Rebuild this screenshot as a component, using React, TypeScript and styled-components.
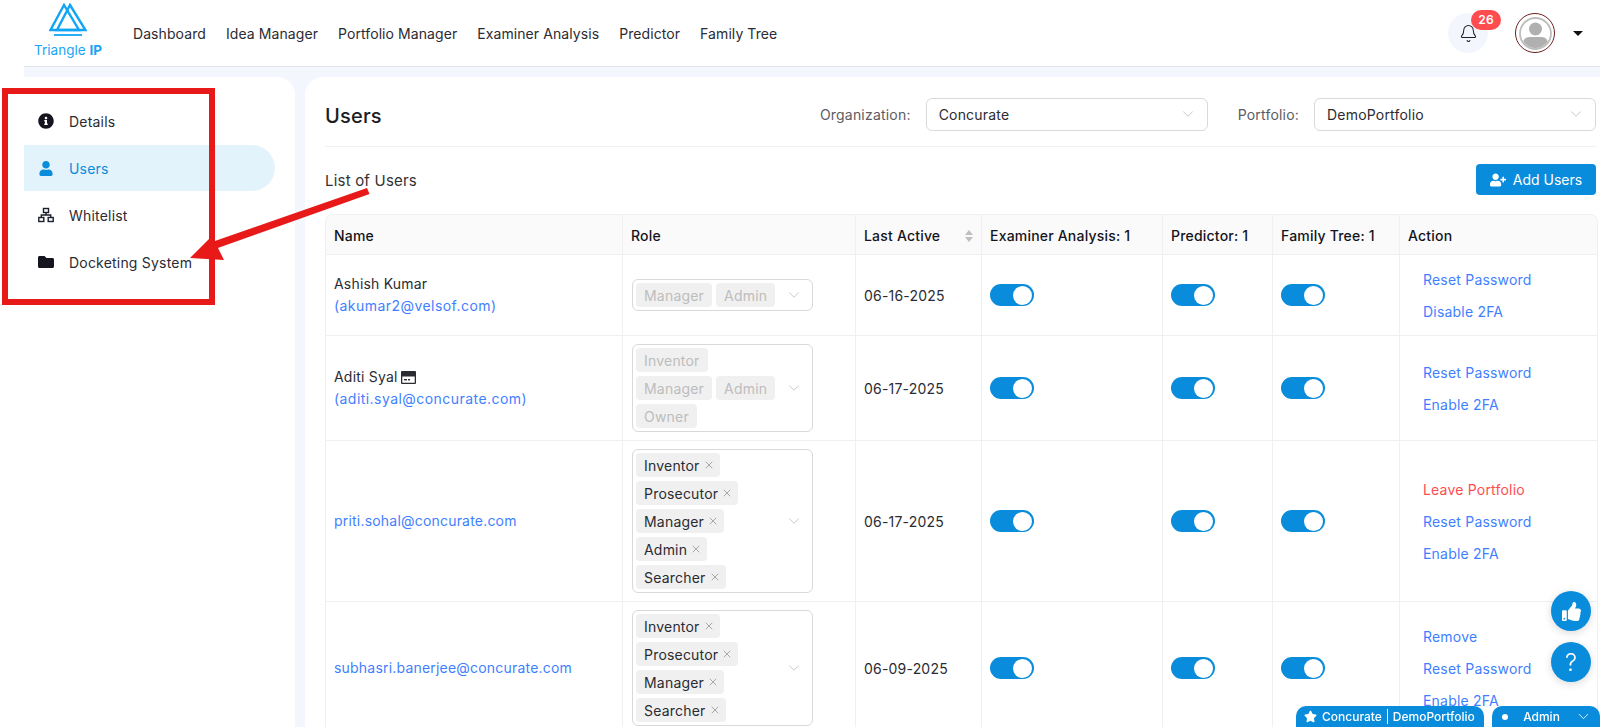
import { ChevronDown, Bell, X } from "lucide-react";
import { FaInfoCircle, FaUser, FaFolder, FaUserPlus, FaThumbsUp, FaStar } from "react-icons/fa";
import styled, { createGlobalStyle } from "styled-components";

const BLUE = "#0a8cdc";
const LINK = "#3f7fff";

const GlobalStyle = createGlobalStyle`
	html, body {
		margin: 0;
		height: 100%;
		overflow: hidden;
		background: #fff;
		font-family: Inter, "Liberation Sans", sans-serif;
		font-size: 14px;
		color: #2b2b33;
		letter-spacing: 0.2px;
	}
	* {
		box-sizing: border-box;
	}
`;

type UserRow = {
	name?: string;
	email: string;
	card?: boolean;
	roles: string[][];
	disabled?: boolean;
	date: string;
	actions: { label: string; danger?: boolean }[];
};

const NAV_ITEMS = ["Dashboard", "Idea Manager", "Portfolio Manager", "Examiner Analysis", "Predictor", "Family Tree"];

const COLUMNS = [297, 233, 126, 181, 110, 127, 197];

const ROWS: UserRow[] = [
	{
		name: "Ashish Kumar",
		email: "(akumar2@velsof.com)",
		roles: [["Manager", "Admin"]],
		disabled: true,
		date: "06-16-2025",
		actions: [{ label: "Reset Password" }, { label: "Disable 2FA" }],
	},
	{
		name: "Aditi Syal",
		email: "(aditi.syal@concurate.com)",
		card: true,
		roles: [["Inventor"], ["Manager", "Admin"], ["Owner"]],
		disabled: true,
		date: "06-17-2025",
		actions: [{ label: "Reset Password" }, { label: "Enable 2FA" }],
	},
	{
		email: "priti.sohal@concurate.com",
		roles: [["Inventor"], ["Prosecutor"], ["Manager"], ["Admin"], ["Searcher"]],
		date: "06-17-2025",
		actions: [{ label: "Leave Portfolio", danger: true }, { label: "Reset Password" }, { label: "Enable 2FA" }],
	},
	{
		email: "subhasri.banerjee@concurate.com",
		roles: [["Inventor"], ["Prosecutor"], ["Manager"], ["Searcher"]],
		date: "06-09-2025",
		actions: [{ label: "Remove" }, { label: "Reset Password" }, { label: "Enable 2FA" }],
	},
];

const Logo = () => (
	<LogoBox>
		<svg width="38" height="34" viewBox="0 0 38 34" fill="none" stroke="#12a5f5" strokeWidth="2.4">
			<path d="M15 2 L1.500 27 H30 Z" />
			<path d="M21 2 L36.500 27 H8 Z" />
			<path d="M5 32 H33" strokeWidth="1.8" />
		</svg>
		<LogoText>
			Triangle <b>IP</b>
		</LogoText>
	</LogoBox>
);

const SitemapIcon = () => (
	<svg width="16" height="16" viewBox="0 0 16 16" fill="none" stroke="#1c1f2b" strokeWidth="1.4">
		<rect x="5.500" y="1.500" width="5" height="4" />
		<rect x="0.800" y="10.500" width="5" height="4" />
		<rect x="10.200" y="10.500" width="5" height="4" />
		<path d="M8 5.500 V8 M3.300 10.500 V8 H12.700 V10.500" />
	</svg>
);

const CardIcon = () => (
	<CardSvg width="15" height="13" viewBox="0 0 15 13">
		<path d="M1 0 H14 Q15 0 15 1 V12 Q15 13 14 13 H1 Q0 13 0 12 V1 Q0 0 1 0 Z M1.300 5.500 V11.700 H13.700 V5.500 Z" fill="#2b2b33" fillRule="evenodd" />
		<rect x="3" y="8" width="3" height="1.400" fill="#2b2b33" />
		<rect x="7" y="8" width="2" height="1.400" fill="#2b2b33" />
	</CardSvg>
);

const Toggle = () => (
	<ToggleTrack>
		<ToggleKnob />
	</ToggleTrack>
);

const RoleSelect = ({ lines, disabled }: { lines: string[][]; disabled?: boolean }) => (
	<SelectBox>
		<TagLines>
			{lines.map((line) => (
				<TagLine key={line.join()}>
					{line.map((role) => (
						<Tag key={role} $disabled={disabled}>
							{role}
							{!disabled && <X size={12} strokeWidth={1.2} color="#777" />}
						</Tag>
					))}
				</TagLine>
			))}
		</TagLines>
		<SelectChevron size={18} strokeWidth={1} />
	</SelectBox>
);

const App = () => {
	return (
		<Page>
			<GlobalStyle />
			<Header>
				<Logo />
				<Nav>
					{NAV_ITEMS.map((item) => (
						<NavLink key={item}>{item}</NavLink>
					))}
				</Nav>
				<HeaderRight>
					<BellCircle>
						<Bell size={19} strokeWidth={1.3} color="#1c1f2b" />
						<Badge>26</Badge>
					</BellCircle>
					<Avatar>
						<svg width="33" height="33" viewBox="0 0 33 33">
							<defs>
								<clipPath id="avatar-clip">
									<circle cx="16.500" cy="16.500" r="14.500" />
								</clipPath>
							</defs>
							<circle cx="16.500" cy="16.500" r="15.500" fill="#fff" stroke="#bdbdbd" strokeWidth="1.800" />
							<g clipPath="url(#avatar-clip)" fill="#b0b0b0">
								<circle cx="16.500" cy="12" r="6.500" />
								<rect x="4" y="20" width="25" height="14" rx="6" />
							</g>
						</svg>
					</Avatar>
					<Caret />
				</HeaderRight>
			</Header>

			<Body>
				<Sidebar>
					<SideItem>
						<FaInfoCircle size={16} />
						Details
					</SideItem>
					<SideItem $active>
						<FaUser size={15} />
						Users
					</SideItem>
					<SideItem>
						<SitemapIcon />
						Whitelist
					</SideItem>
					<SideItem>
						<FaFolder size={16} />
						Docketing System
					</SideItem>
				</Sidebar>

				<Main>
					<TopBar>
						<Title>Users</Title>
						<Filters>
							<FilterLabel>Organization:</FilterLabel>
							<Dropdown $width={282}>
								Concurate
								<ChevronDown size={18} strokeWidth={1} color="#b4b4b4" />
							</Dropdown>
							<FilterLabel $gap={30}>Portfolio:</FilterLabel>
							<Dropdown $width={282}>
								DemoPortfolio
								<ChevronDown size={18} strokeWidth={1} color="#b4b4b4" />
							</Dropdown>
						</Filters>
					</TopBar>

					<ListBar>
						<ListTitle>List of Users</ListTitle>
						<AddButton>
							<FaUserPlus size={16} />
							Add Users
						</AddButton>
					</ListBar>

					<Table>
						<colgroup>
							{COLUMNS.map((w, i) => (
								<col key={i} width={w} />
							))}
						</colgroup>
						<thead>
							<tr>
								<HeadCell>Name</HeadCell>
								<HeadCell>Role</HeadCell>
								<HeadCell>
									<HeadSort>
										Last Active
										<SortArrows>
											<SortUp />
											<SortDown />
										</SortArrows>
									</HeadSort>
								</HeadCell>
								<HeadCell>Examiner Analysis: 1</HeadCell>
								<HeadCell>Predictor: 1</HeadCell>
								<HeadCell>Family Tree: 1</HeadCell>
								<HeadCell>Action</HeadCell>
							</tr>
						</thead>
						<tbody>
							{ROWS.map((row) => (
								<tr key={row.email}>
									<Cell>
										{row.name && (
											<UserName>
												{row.name}
												{row.card && <CardIcon />}
											</UserName>
										)}
										<Email $wide={!!row.name}>{row.email}</Email>
									</Cell>
									<Cell>
										<RoleSelect lines={row.roles} disabled={row.disabled} />
									</Cell>
									<Cell>{row.date}</Cell>
									<Cell>
										<Toggle />
									</Cell>
									<Cell>
										<Toggle />
									</Cell>
									<Cell>
										<Toggle />
									</Cell>
									<Cell>
										{row.actions.map((action) => (
											<ActionLink key={action.label} $danger={action.danger}>
												{action.label}
											</ActionLink>
										))}
									</Cell>
								</tr>
							))}
						</tbody>
					</Table>
				</Main>
			</Body>

			<Fabs>
				<Fab>
					<FaThumbsUp size={19} />
				</Fab>
				<Fab>?</Fab>
			</Fabs>

			<BottomTabs>
				<BottomTab $width={188}>
					<FaStar size={13} />
					Concurate
					<TabDivider />
					DemoPortfolio
				</BottomTab>
				<BottomTab $width={108}>
					<TabDot />
					<TabLabel>Admin</TabLabel>
					<ChevronDown size={17} strokeWidth={1.2} />
				</BottomTab>
			</BottomTabs>

			{/* annotation drawn over the screenshot */}
			<Highlight />
			<Arrow width="230" height="90" viewBox="0 0 230 90">
				<path d="M183 2 L185.500 8 L31 63 L28 56 Z" fill="#e81919" />
				<path d="M6 72 L28 50 L40 74 Z" fill="#e81919" />
			</Arrow>
		</Page>
	);
};

export default App;

const Page = styled.div`
	height: 727px;
	overflow: hidden;
	display: flex;
	flex-direction: column;
`;

const Header = styled.header`
	height: 67px;
	flex: none;
	display: flex;
	align-items: center;
	margin-left: 24px;
	padding: 0 17px 0 9px;
	border-bottom: 1px solid #dfe3ea;
	background: #fff;
`;

const LogoBox = styled.div`
	width: 70px;
	display: flex;
	flex-direction: column;
	align-items: center;
	gap: 6px;
	margin-top: -5px;
`;

const LogoText = styled.span`
	font-size: 13.500px;
	line-height: 15px;
	letter-spacing: 0;
	color: #1ba4f4;
	white-space: nowrap;

	b {
		font-weight: 700;
	}
`;

const Nav = styled.nav`
	display: flex;
	gap: 20px;
	margin-left: 30px;
	letter-spacing: 0.08px;
`;

const NavLink = styled.a`
	font-size: 14px;
	color: #2b2b33;
`;

const HeaderRight = styled.div`
	margin-left: auto;
	display: flex;
	align-items: center;
`;

const BellCircle = styled.div`
	position: relative;
	width: 40px;
	height: 40px;
	border-radius: 50%;
	background: #f3f7fd;
	display: flex;
	align-items: center;
	justify-content: center;
`;

const Badge = styled.span`
	position: absolute;
	left: 23px;
	top: -3px;
	width: 30px;
	height: 20px;
	border-radius: 10px;
	background: #ff4d4f;
	color: #fff;
	font-size: 12px;
	font-weight: 600;
	line-height: 20px;
	text-align: center;
`;

const Avatar = styled.div`
	width: 40px;
	height: 40px;
	margin-left: 27px;
	border-radius: 50%;
	border: 1.500px solid #6e1f1f;
	display: flex;
	align-items: center;
	justify-content: center;
`;

const Caret = styled.span`
	margin-left: 18px;
	width: 0;
	height: 0;
	border-left: 5px solid transparent;
	border-right: 5px solid transparent;
	border-top: 5px solid #111;
`;

const Body = styled.div`
	flex: 1;
	min-height: 0;
	margin-left: 24px;
	padding-top: 10px;
	background: #f3f7fd;
	display: flex;
	gap: 10px;
`;

const Sidebar = styled.aside`
	width: 271px;
	flex: none;
	background: #fff;
	border-top-right-radius: 18px;
	padding-top: 21px;
	display: flex;
	flex-direction: column;
	gap: 1px;
`;

const SideItem = styled.div<{ $active?: boolean }>`
	width: 251px;
	height: 46px;
	padding-left: 14px;
	display: flex;
	align-items: center;
	gap: 15px;
	border-radius: 0 23px 23px 0;
	color: ${(props) => (props.$active ? BLUE : "#2b2b33")};
	background: ${(props) => (props.$active ? "#e3f3fb" : "transparent")};

	svg {
		width: 16px;
		flex: none;
		color: ${(props) => (props.$active ? BLUE : "#15151f")};
	}
`;

const Main = styled.main`
	flex: 1;
	min-width: 0;
	background: #fff;
	border-top-left-radius: 18px;
	padding: 0 4px 0 20px;
`;

const TopBar = styled.div`
	height: 70px;
	display: flex;
	align-items: center;
	justify-content: space-between;
	border-bottom: 1px solid #f0f0f0;
	padding-top: 5px;
`;

const Title = styled.h1`
	margin: 4px 0 0;
	font-size: 20px;
	font-weight: 500;
	color: #1c1c24;
`;

const Filters = styled.div`
	display: flex;
	align-items: center;
`;

const FilterLabel = styled.span<{ $gap?: number }>`
	margin-left: ${(props) => props.$gap ?? 0}px;
	margin-right: 15px;
	color: #5c5c64;
`;

const Dropdown = styled.div<{ $width: number }>`
	width: ${(props) => props.$width}px;
	height: 33px;
	padding: 0 10px 0 12px;
	display: flex;
	align-items: center;
	justify-content: space-between;
	background: #fff;
	border: 1px solid #d9d9d9;
	border-radius: 6px;
`;

const ListBar = styled.div`
	height: 67px;
	padding-bottom: 2px;
	display: flex;
	align-items: center;
	justify-content: space-between;
`;

const ListTitle = styled.h2`
	margin: 2px 0 0;
	font-size: 15px;
	font-weight: 400;
	color: #333;
`;

const AddButton = styled.button`
	width: 120px;
	height: 31px;
	border: 0;
	border-radius: 4px;
	background: ${BLUE};
	color: #fff;
	font: inherit;
	display: flex;
	align-items: center;
	justify-content: center;
	gap: 7px;
`;

const Table = styled.table`
	width: 1271px;
	table-layout: fixed;
	border-collapse: separate;
	border-spacing: 0;
	border: 1px solid #f0f0f0;
	border-bottom: 0;
	border-radius: 8px 8px 0 0;
`;

const HeadCell = styled.th`
	height: 40px;
	padding: 2px 8px 0;
	text-align: left;
	font-weight: 500;
	color: #14141c;
	background: #fafafa;
	border-bottom: 1px solid #f0f0f0;
	border-right: 1px solid #f0f0f0;
	white-space: nowrap;

	&:first-child {
		border-top-left-radius: 8px;
	}
	&:last-child {
		border-top-right-radius: 8px;
		border-right: 0;
	}
`;

const HeadSort = styled.div`
	display: flex;
	align-items: center;
	justify-content: space-between;
`;

const SortArrows = styled.span`
	display: flex;
	flex-direction: column;
	gap: 2px;
`;

const SortUp = styled.span`
	width: 0;
	height: 0;
	border-left: 4px solid transparent;
	border-right: 4px solid transparent;
	border-bottom: 5px solid #bfbfbf;
`;

const SortDown = styled.span`
	width: 0;
	height: 0;
	border-left: 4px solid transparent;
	border-right: 4px solid transparent;
	border-top: 5px solid #bfbfbf;
`;

const Cell = styled.td`
	padding: 8px;
	vertical-align: middle;
	border-bottom: 1px solid #f0f0f0;
	border-right: 1px solid #f0f0f0;
	color: #2b2b33;

	&:last-child {
		border-right: 0;
	}
`;

const UserName = styled.div`
	display: flex;
	align-items: center;
	gap: 3px;
	margin-bottom: 2px;
	line-height: 20px;
`;

const CardSvg = styled.svg`
	flex: none;
`;

const Email = styled.a<{ $wide?: boolean }>`
	display: block;
	line-height: 20px;
	color: ${LINK};
	white-space: nowrap;
	letter-spacing: ${(props) => (props.$wide ? "0.45px" : "0.2px")};
`;

const SelectBox = styled.div`
	position: relative;
	width: 181px;
	margin-left: 1px;
	padding: 3px;
	border: 1px solid #d9d9d9;
	border-radius: 6px;
	background: #fff;
`;

const TagLines = styled.div`
	display: flex;
	flex-direction: column;
	gap: 4px;
`;

const TagLine = styled.div`
	display: flex;
	gap: 4px;
`;

const Tag = styled.span<{ $disabled?: boolean }>`
	height: 24px;
	padding: 0 ${(props) => (props.$disabled ? "8px" : "5px")} 0 8px;
	display: inline-flex;
	align-items: center;
	gap: 3px;
	border-radius: 4px;
	background: #f0f0f0;
	color: ${(props) => (props.$disabled ? "#bdbdbd" : "#2b2b33")};
`;

const SelectChevron = styled(ChevronDown)`
	position: absolute;
	right: 9px;
	top: 50%;
	transform: translateY(-50%);
	color: #b4b4b4;
`;

const ToggleTrack = styled.div`
	width: 44px;
	height: 22px;
	border-radius: 11px;
	background: ${BLUE};
	display: flex;
	align-items: center;
	justify-content: flex-end;
	padding-right: 2px;
`;

const ToggleKnob = styled.span`
	width: 19px;
	height: 19px;
	border-radius: 50%;
	background: #fff;
`;

const ActionLink = styled.a<{ $danger?: boolean }>`
	display: flex;
	align-items: center;
	height: 32px;
	padding-left: 15px;
	color: ${(props) => (props.$danger ? "#ff4d4f" : LINK)};
`;

const Fabs = styled.div`
	position: fixed;
	right: 9px;
	top: 591px;
	display: flex;
	flex-direction: column;
	gap: 11px;
`;

const Fab = styled.div`
	width: 40px;
	height: 40px;
	border-radius: 50%;
	background: ${BLUE};
	color: #fff;
	font-size: 24px;
	font-weight: 300;
	display: flex;
	align-items: center;
	justify-content: center;
	box-shadow: 0 2px 8px rgba(0, 0, 0, 0.15);
`;

const BottomTabs = styled.div`
	position: fixed;
	right: 0;
	bottom: 0;
	display: flex;
	gap: 8px;
`;

const BottomTab = styled.div<{ $width: number }>`
	width: ${(props) => props.$width}px;
	height: 21px;
	padding: 0 8px;
	display: flex;
	align-items: center;
	gap: 5px;
	border-radius: 10px 10px 0 0;
	background: ${BLUE};
	color: #fff;
	font-size: 12px;
	font-weight: 500;
	letter-spacing: 0;
	white-space: nowrap;

	svg {
		flex: none;
	}
`;

const TabDivider = styled.span`
	width: 1px;
	height: 15px;
	flex: none;
	background: #fff;
`;

const TabDot = styled.span`
	width: 6px;
	height: 6px;
	flex: none;
	margin-left: 2px;
	border-radius: 50%;
	background: #fff;
`;

const TabLabel = styled.span`
	margin: 0 auto;
`;

const Highlight = styled.div`
	position: fixed;
	left: 2px;
	top: 88px;
	width: 213px;
	height: 217px;
	border: 6px solid #e81919;
	pointer-events: none;
`;

const Arrow = styled.svg`
	position: fixed;
	left: 184px;
	top: 186px;
	pointer-events: none;
`;
